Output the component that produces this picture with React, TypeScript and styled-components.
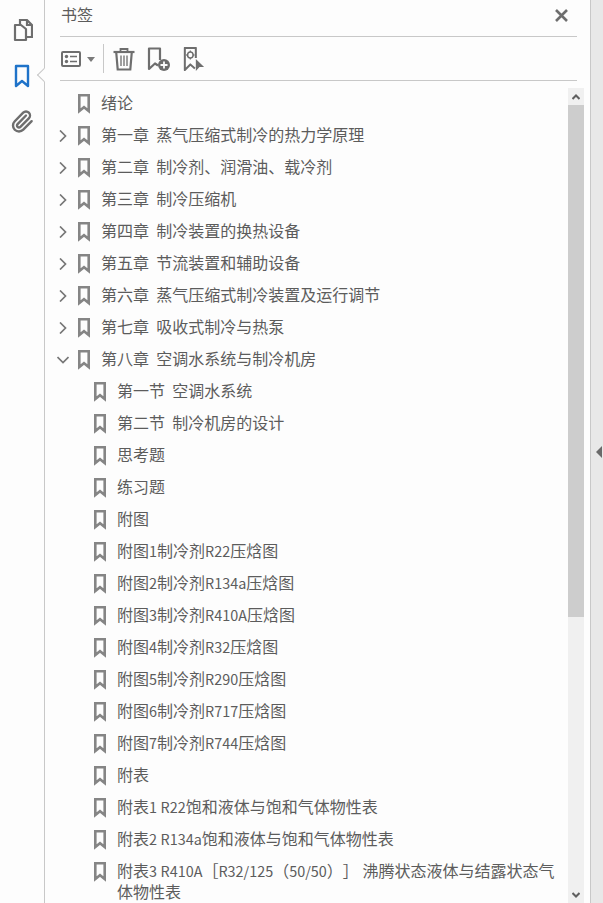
import React from 'react';
import styled, { createGlobalStyle } from 'styled-components';
import { Paperclip } from 'lucide-react';

const GlobalStyle = createGlobalStyle`
  html, body {
    margin: 0;
    padding: 0;
    height: 100%;
    overflow: hidden;
    background: #fdfdfd;
  }
`;

const Page = styled.div`
  display: flex;
  width: 603px;
  height: 903px;
  overflow: hidden;
  font-family: "Noto Sans CJK SC", "Liberation Sans", sans-serif;
  color: #5c5c5c;
`;

const Rail = styled.div`
  position: relative;
  flex: none;
  width: 45px;
  display: flex;
  flex-direction: column;
  align-items: center;
  padding: 17px 1px 0 0;
  box-sizing: border-box;
  border-right: 1px solid #c8c8c8;
`;

const RailIcon = styled.div<{ $gap: number }>`
  width: 24px;
  height: 24px;
  margin-top: ${(p) => p.$gap}px;
  display: flex;
  align-items: center;
  justify-content: center;
`;

const Notch = styled.div`
  position: absolute;
  right: -5px;
  top: 70px;
  width: 9px;
  height: 9px;
  background: #fdfdfd;
  border-left: 1px solid #c8c8c8;
  border-bottom: 1px solid #c8c8c8;
  transform: rotate(45deg);
`;

const Panel = styled.div`
  flex: none;
  width: 545px;
  height: 903px;
  display: flex;
  flex-direction: column;
  border-right: 1px solid #c8c8c8;
`;

const Header = styled.div`
  flex: none;
  height: 28px;
  margin: 0 13px 0 15px;
  padding: 0 0 8px 1px;
  display: flex;
  align-items: center;
  justify-content: space-between;
  border-bottom: 1px solid #c8c8c8;
  font-size: 16px;
`;

const Toolbar = styled.div`
  flex: none;
  height: 43px;
  margin: 0 13px 0 15px;
  padding-left: 1px;
  display: flex;
  align-items: center;
  border-bottom: 1px solid #c8c8c8;
`;

const ToolGroup = styled.div`
  display: flex;
  align-items: center;
  height: 29px;
  padding-right: 8px;
  margin-right: 8px;
  border-right: 1px solid #c8c8c8;
`;

const ToolIcon = styled.div`
  flex: none;
  width: 24px;
  height: 24px;
  margin-right: 11px;
  display: flex;
  align-items: center;
  justify-content: center;
`;

const Body = styled.div`
  flex: 1;
  min-height: 0;
  display: flex;
  padding-top: 7px;
`;

const List = styled.div`
  flex: 1;
  min-width: 0;
  overflow: hidden;
`;

const Row = styled.div<{ $level: number }>`
  display: flex;
  align-items: flex-start;
  min-height: 32px;
  padding-left: ${(p) => (p.$level === 2 ? 49 : 14)}px;
  padding-top: 6px;
  box-sizing: border-box;
  font-size: 16px;
  line-height: 20px;
  white-space: pre-wrap;
  text-spacing-trim: space-all;
`;

const Twist = styled.div`
  flex: none;
  width: 8px;
  height: 20px;
  margin-right: 11px;
  display: flex;
  align-items: center;
  justify-content: center;
`;

const Mark = styled.div`
  flex: none;
  width: 12px;
  height: 20px;
  margin-right: 11px;
  display: flex;
  align-items: center;
`;

const Label = styled.div`
  flex: 1;
  min-width: 0;
  margin-top: -2px;
  padding-right: 10px;
`;

const Latin = styled.span`
  font-size: 14.4px;
`;

const Scrollbar = styled.div`
  flex: none;
  width: 16px;
  margin-right: 6px;
  background: #f0f0f0;
  display: flex;
  flex-direction: column;
`;

const ScrollButton = styled.div`
  flex: none;
  width: 16px;
  height: 17px;
  display: flex;
  align-items: center;
  justify-content: center;
`;

const Thumb = styled.div`
  flex: none;
  width: 16px;
  height: 512px;
  background: #cdcdcd;
`;

const ScrollSpace = styled.div`
  flex: 1;
`;

const Strip = styled.div`
  flex: 1;
  background: #e8e8e8;
  display: flex;
  align-items: center;
`;

const StripArrow = styled.div`
  width: 0;
  height: 0;
  margin-left: 5px;
  border-top: 6px solid transparent;
  border-bottom: 6px solid transparent;
  border-right: 6px solid #6a6a6a;
`;

const ICON = '#6e6e6e';

const PagesIcon = () => (
  <svg width="22" height="24" viewBox="0 0 22 24" fill="none" stroke={ICON} strokeWidth="2.2">
    <path d="M9 7V2h7l5 5v12h-6" />
    <path d="M16 2v5h5" />
    <path d="M4 7h6l5 4v11H4z" fill="#fdfdfd" strokeLinejoin="round" />
  </svg>
);

const BlueMark = () => (
  <svg width="16" height="24" viewBox="0 0 16 24" fill="none" stroke="#1f73c9" strokeWidth="2.4" strokeLinejoin="round">
    <path d="M2 2h12v20l-6-5-6 5z" />
  </svg>
);

const ListIcon = () => (
  <svg width="20" height="16" viewBox="0 0 20 16" fill="none" stroke={ICON} strokeWidth="2">
    <rect x="1" y="1" width="18" height="14" rx="1" />
    <circle cx="5.5" cy="5.5" r="1.7" fill={ICON} stroke="none" />
    <circle cx="5.5" cy="10.5" r="1.7" fill={ICON} stroke="none" />
    <path d="M9 5.5h7M9 10.5h7" strokeWidth="1.6" />
  </svg>
);

const Caret = () => (
  <svg width="8" height="5" viewBox="0 0 8 5" style={{ marginLeft: 6, marginTop: 1 }}>
    <path d="M0 0h8L4 5z" fill="#7a7a7a" />
  </svg>
);

const TrashIcon = () => (
  <svg width="22" height="24" viewBox="0 0 22 24" fill="none" stroke={ICON} strokeWidth="2.2">
    <path d="M0.5 5h21" />
    <path d="M7.5 5V2h7v3" strokeWidth="1.8" />
    <path d="M3.2 5l1.5 17.5h12.6L18.8 5" />
    <path d="M8 8.5v10.5M11 8.5v10.5M14 8.5v10.5" strokeWidth="1.3" />
  </svg>
);

const AddMarkIcon = () => (
  <svg width="24" height="24" viewBox="0 0 24 24" fill="none" stroke={ICON} strokeWidth="2.2">
    <path d="M13 13V1.5H2V22l6-5.5 3 2" strokeLinejoin="round" />
    <circle cx="17" cy="18" r="6" fill={ICON} stroke="none" />
    <path d="M13.5 18h7M17 14.5v7" stroke="#fdfdfd" strokeWidth="1.8" />
  </svg>
);

const PickMarkIcon = () => (
  <svg width="22" height="24" viewBox="0 0 24 24" fill="none" stroke={ICON} strokeWidth="2.2" preserveAspectRatio="none">
    <path d="M14 11V1H2v22l6-5.5 5 4" strokeLinejoin="round" />
    <circle cx="8" cy="8" r="3" strokeWidth="1.6" />
    <path d="M8 3.5v1.5M8 11v1.5M3.5 8H5M11 8h1.5" strokeWidth="1.3" />
    <path d="M14 12l9 8h-5l-4 4z" fill={ICON} stroke="none" />
  </svg>
);

const CloseIcon = () => (
  <svg width="13" height="13" viewBox="0 0 13 13" stroke={ICON} strokeWidth="2.6" style={{ marginRight: 9, marginTop: 2 }}>
    <path d="M1 1l11 11M12 1L1 12" />
  </svg>
);

const TreeMark = () => (
  <svg width="12" height="20" viewBox="0 0 12 20" fill="none" stroke="#858585" strokeWidth="2.6">
    <path d="M1.3 1.3h9.4v15.7L6 13.2 1.3 17z" />
  </svg>
);

const Chevron = ({ open }: { open?: boolean }) => (
  <svg width="12" height="12" viewBox="0 0 12 12" fill="none" stroke="#777" strokeWidth="1.7" style={{ flex: 'none' }}>
    <path d={open ? 'M0.5 3l5.5 5.5L11.5 3' : 'M3 0.5L8.5 6 3 11.5'} />
  </svg>
);

const Arrow = ({ down }: { down?: boolean }) => (
  <svg width="8" height="6" viewBox="0 0 8 6" fill="none" stroke="#5f5f5f" strokeWidth="2">
    <path d={down ? 'M0.5 1l3.5 3.5L7.5 1' : 'M0.5 5L4 1.5 7.5 5'} />
  </svg>
);

type Item = { text: string; level: 1 | 2; twist?: 'closed' | 'open' };

const items: Item[] = [
  { text: '绪论', level: 1 },
  { text: '第一章  蒸气压缩式制冷的热力学原理', level: 1, twist: 'closed' },
  { text: '第二章  制冷剂、润滑油、载冷剂', level: 1, twist: 'closed' },
  { text: '第三章  制冷压缩机', level: 1, twist: 'closed' },
  { text: '第四章  制冷装置的换热设备', level: 1, twist: 'closed' },
  { text: '第五章  节流装置和辅助设备', level: 1, twist: 'closed' },
  { text: '第六章  蒸气压缩式制冷装置及运行调节', level: 1, twist: 'closed' },
  { text: '第七章  吸收式制冷与热泵', level: 1, twist: 'closed' },
  { text: '第八章  空调水系统与制冷机房', level: 1, twist: 'open' },
  { text: '第一节  空调水系统', level: 2 },
  { text: '第二节  制冷机房的设计', level: 2 },
  { text: '思考题', level: 2 },
  { text: '练习题', level: 2 },
  { text: '附图', level: 2 },
  { text: '附图1制冷剂R22压焓图', level: 2 },
  { text: '附图2制冷剂R134a压焓图', level: 2 },
  { text: '附图3制冷剂R410A压焓图', level: 2 },
  { text: '附图4制冷剂R32压焓图', level: 2 },
  { text: '附图5制冷剂R290压焓图', level: 2 },
  { text: '附图6制冷剂R717压焓图', level: 2 },
  { text: '附图7制冷剂R744压焓图', level: 2 },
  { text: '附表', level: 2 },
  { text: '附表1 R22饱和液体与饱和气体物性表', level: 2 },
  { text: '附表2 R134a饱和液体与饱和气体物性表', level: 2 },
  { text: '附表3 R410A［R32/125（50/50）］ 沸腾状态液体与结露状态气\n体物性表', level: 2 },
];

// latin runs sit a little narrower than the CJK around them
const renderLabel = (text: string) =>
  text.split(/([A-Za-z0-9/]+|\n)/).map((part, i) => {
    if (part === '\n') return <br key={i} />;
    return i % 2 === 1 ? <Latin key={i}>{part}</Latin> : part;
  });

const App = () => (
  <Page>
    <GlobalStyle />
    <Rail>
      <RailIcon $gap={1}><PagesIcon /></RailIcon>
      <RailIcon $gap={22}><BlueMark /></RailIcon>
      <RailIcon $gap={21}>
        <Paperclip size={25} color={ICON} strokeWidth={2.4} />
      </RailIcon>
      <Notch />
    </Rail>
    <Panel>
      <Header>
        <span>书签</span>
        <CloseIcon />
      </Header>
      <Toolbar>
        <ToolGroup>
          <ListIcon />
          <Caret />
        </ToolGroup>
        <ToolIcon><TrashIcon /></ToolIcon>
        <ToolIcon><AddMarkIcon /></ToolIcon>
        <ToolIcon><PickMarkIcon /></ToolIcon>
      </Toolbar>
      <Body>
        <List>
          {items.map((item) => (
            <Row key={item.text} $level={item.level}>
              {item.level === 1 && (
                <Twist>{item.twist && <Chevron open={item.twist === 'open'} />}</Twist>
              )}
              <Mark><TreeMark /></Mark>
              <Label>{renderLabel(item.text)}</Label>
            </Row>
          ))}
        </List>
        <Scrollbar>
          <ScrollButton><Arrow /></ScrollButton>
          <Thumb />
          <ScrollSpace />
          <ScrollButton><Arrow down /></ScrollButton>
        </Scrollbar>
      </Body>
    </Panel>
    <Strip>
      <StripArrow />
    </Strip>
  </Page>
);

export default App;
